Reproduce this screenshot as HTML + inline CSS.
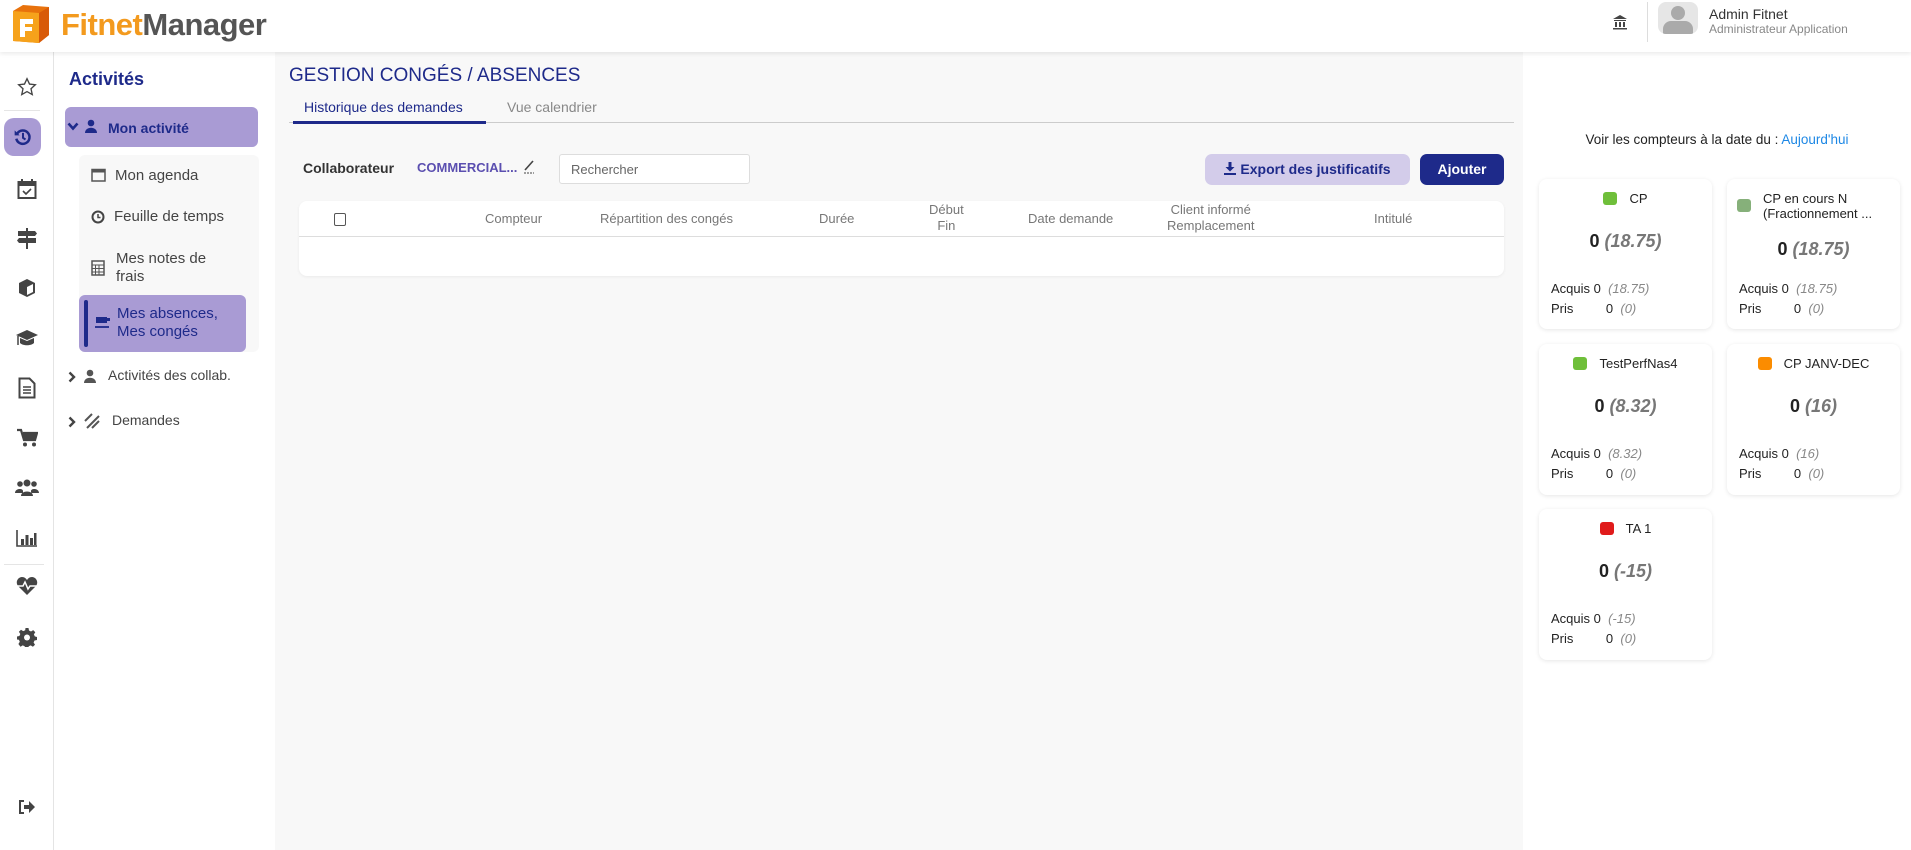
<!DOCTYPE html>
<html><head><meta charset="utf-8"><style>
*{box-sizing:border-box;margin:0;padding:0}
body{width:1911px;height:850px;overflow:hidden;font-family:"Liberation Sans",sans-serif;background:#f8f8f8;position:relative;color:#333}
.abs{position:absolute}
#top{left:0;top:0;width:1911px;height:52px;background:#fff;box-shadow:0 2px 4px rgba(0,0,0,.08);z-index:5}
#rail{left:0;top:52px;width:54px;height:798px;background:#fff;border-right:1px solid #e4e4e4}
#sub{left:54px;top:52px;width:221px;height:798px;background:#fff}
#right{left:1523px;top:52px;width:388px;height:798px;background:#fff}
.ic{position:absolute;left:13px;width:28px;height:28px;display:flex;align-items:center;justify-content:center}
.card{position:absolute;width:173px;height:150px;background:#fff;border-radius:8px;box-shadow:0 1px 4px rgba(0,0,0,.1);font-size:13px;color:#222}
.card .t{position:absolute;top:12px;left:0;right:0;text-align:center;font-size:13px}
.sq{display:inline-block;width:14px;height:13px;border-radius:3px;vertical-align:-2px;margin-right:12px}
.card .v{position:absolute;left:0;right:0;text-align:center;font-size:18px;font-weight:bold}
.card .v i{color:#777}
.card .r{position:absolute;left:12px;font-size:13px}
.card .r i{color:#888}
.th{position:absolute;font-size:13px;color:#777;text-align:center}
</style></head><body>
<div id="top" class="abs">
 <svg class="abs" style="left:9px;top:3px" width="42" height="42" viewBox="0 0 42 42"><path d="M4 8 L14 2 L40 4 L40 32 L30 40 L4 38Z" fill="#e8720c"/><path d="M4 8 L30 10 L30 40 L4 38Z" fill="#f6a21b"/><path d="M30 10 L40 4 L40 32 L30 40Z" fill="#d85a08"/><path d="M11 16h13v5h-8v3h7v4h-7v6h-5z" fill="#fff"/></svg>
 <div class="abs" style="left:61px;top:7px;font-size:31px;font-weight:bold;letter-spacing:-0.5px"><span style="color:#f39a1e">Fitnet</span><span style="color:#555">Manager</span></div>
 <svg class="abs" style="left:1612px;top:14px" width="16" height="16" viewBox="0 0 16 16"><path d="M8 1 L15 5 H1Z M2 6h12v1H2z M3 8h2v5H3z M7 8h2v5H7z M11 8h2v5h-2z M1 14h14v1.5H1z" fill="#444"/></svg>
 <div class="abs" style="left:1647px;top:2px;width:1px;height:40px;background:#ddd"></div>
 <div class="abs" style="left:1658px;top:2px;width:40px;height:32px;background:#e6e6e6;border-radius:8px;overflow:hidden"><div class="abs" style="left:13px;top:4px;width:14px;height:14px;border-radius:50%;background:#aaa"></div><div class="abs" style="left:5px;top:19px;width:30px;height:18px;border-radius:8px 8px 0 0;background:#aaa"></div></div>
 <div class="abs" style="left:1709px;top:6px;font-size:14px;color:#333">Admin Fitnet</div>
 <div class="abs" style="left:1709px;top:22px;font-size:12px;color:#888">Administrateur Application</div>
</div>

<div id="rail" class="abs">
 <div class="ic" style="top:21px"><svg width="20" height="20" viewBox="0 0 24 24"><path d="M12 2l3 6.5 7 .8-5.2 4.8 1.5 7L12 17.5 5.7 21.1l1.5-7L2 9.3l7-.8z" fill="none" stroke="#444" stroke-width="1.6"/></svg></div>
 <div class="abs" style="left:4px;top:58px;width:36px;height:1px;background:#e5e5e5"></div>
 <div class="abs" style="left:4px;top:66px;width:37px;height:38px;background:#a99bd4;border-radius:10px;display:flex;align-items:center;justify-content:center"><svg width="20" height="20" viewBox="0 0 24 24"><path d="M5 8a8 8 0 1 1-1 6" fill="none" stroke="#1e2a8a" stroke-width="3"/><path d="M2 4v6h6z" fill="#1e2a8a"/><path d="M12 7v6l3 2" stroke="#1e2a8a" stroke-width="2.4" fill="none"/></svg></div>
 <div class="ic" style="top:123px"><svg width="20" height="22" viewBox="0 0 20 22"><rect x="1.5" y="4" width="17" height="16" fill="none" stroke="#444" stroke-width="2"/><rect x="1.5" y="4" width="17" height="4" fill="#444"/><path d="M5 1v5M15 1v5" stroke="#444" stroke-width="2"/><path d="M6 13l3 3 5-5" stroke="#444" stroke-width="1.6" fill="none"/></svg></div>
 <div class="ic" style="top:172px"><svg width="22" height="22" viewBox="0 0 22 22"><path d="M10 1h2v21h-2z M2 4h17l2 2.5-2 2.5H2z M3 11h17v5H3l-2-2.5z" fill="#444"/></svg></div>
 <div class="ic" style="top:222px"><svg width="20" height="20" viewBox="0 0 20 20"><path d="M10 1l8 4v10l-8 4-8-4V5z" fill="#444"/><path d="M10 9l6-3v8l-6 3z M3.5 6.5L10 9.5" fill="#fff"/></svg></div>
 <div class="ic" style="top:272px"><svg width="24" height="20" viewBox="0 0 24 20"><path d="M12 2L1 7l11 5 11-5z M5 10v5c3 3 11 3 14 0v-5l-7 3z" fill="#444"/><path d="M3 8v9" stroke="#444" stroke-width="1.5"/></svg></div>
 <div class="ic" style="top:322px"><svg width="18" height="22" viewBox="0 0 18 22"><path d="M1.5 1.5h10l5 5v14h-15z" fill="none" stroke="#444" stroke-width="2"/><path d="M5 10h8M5 13h8M5 16h8" stroke="#444" stroke-width="1.5"/></svg></div>
 <div class="ic" style="top:372px"><svg width="22" height="20" viewBox="0 0 22 20"><path d="M1 2h4l3 10h11l2-7H7" fill="none" stroke="#444" stroke-width="2.2"/><path d="M6 5h15l-2 7H8z" fill="#444"/><circle cx="9" cy="16.5" r="2" fill="#444"/><circle cx="18" cy="16.5" r="2" fill="#444"/></svg></div>
 <div class="ic" style="top:422px"><svg width="24" height="20" viewBox="0 0 24 20"><circle cx="12" cy="5" r="3.5" fill="#444"/><circle cx="5" cy="6" r="2.8" fill="#444"/><circle cx="19" cy="6" r="2.8" fill="#444"/><path d="M6 18c0-6 12-6 12 0z M0 15c0-5 8-5 8-2v2z M24 15c0-5-8-5-8-2v2z" fill="#444"/></svg></div>
 <div class="ic" style="top:472px"><svg width="22" height="18" viewBox="0 0 22 18"><path d="M1 1v16h20" stroke="#444" stroke-width="1.6" fill="none"/><path d="M5 10h3v6H5z M9.5 6h3v10h-3z M14 9h3v7h-3z M18 4h2.5v12H18z" fill="#444"/></svg></div>
 <div class="abs" style="left:4px;top:512px;width:40px;height:1px;background:#e5e5e5"></div>
 <div class="ic" style="top:520px"><svg width="22" height="20" viewBox="0 0 22 20"><path d="M11 19L2 10C-1 6 2 1 6 1c2.5 0 4 1.5 5 3 1-1.5 2.5-3 5-3 4 0 7 5 4 9z" fill="#444"/><path d="M1 10h6l2-4 3 7 2-3h7" stroke="#fff" stroke-width="1.5" fill="none"/></svg></div>
 <div class="ic" style="top:571px"><svg width="20" height="20" viewBox="0 0 20 20"><path d="M8.5 1h3l.5 2.5 2 1 2.2-1.4 2.1 2.1L16.9 7.4l.9 2 2.2.6v3l-2.5.5-.9 2 1.4 2.2-2.1 2.1-2.2-1.4-2 .9-.5 2.5h-3l-.5-2.5-2-.9-2.2 1.4L1.4 17l1.4-2.2-.9-2L-.1 12.5V9.5l2.5-.5.9-2L1.9 4.8 4 2.7l2.2 1.4 2-.9z" fill="#444"/><circle cx="10" cy="10.5" r="3" fill="#fff"/></svg></div>
 <div class="ic" style="top:741px"><svg width="18" height="16" viewBox="0 0 18 16"><path d="M6 2H2v12h4" stroke="#444" stroke-width="2" fill="none"/><path d="M6 6h5V2l6 6-6 6v-4H6z" fill="#444"/></svg></div>
</div>

<div id="sub" class="abs">
 <div class="abs" style="left:15px;top:17px;font-size:18px;font-weight:bold;color:#1e2a8a">Activités</div>
 <div class="abs" style="left:11px;top:55px;width:193px;height:40px;background:#a99bd4;border-radius:6px"></div>
 <svg class="abs" style="left:13px;top:70px" width="12" height="9" viewBox="0 0 12 9"><path d="M1.5 1.5L6 6.5l4.5-5" stroke="#1e2a8a" stroke-width="2.6" fill="none"/></svg>
 <svg class="abs" style="left:31px;top:67px" width="12" height="14" viewBox="0 0 12 14"><circle cx="6" cy="4" r="3.3" fill="#1e2a8a"/><path d="M0 14c0-7 12-7 12 0z" fill="#1e2a8a"/></svg>
 <div class="abs" style="left:54px;top:68px;font-size:14px;font-weight:bold;color:#1e2a8a">Mon activité</div>
 <div class="abs" style="left:25px;top:103px;width:180px;height:197px;background:#f8f8f8;border-radius:6px"></div>
 <svg class="abs" style="left:37px;top:115px" width="15" height="15" viewBox="0 0 15 15"><rect x="1" y="2.5" width="13" height="11.5" fill="none" stroke="#555" stroke-width="1.5"/><rect x="1" y="2.5" width="13" height="3" fill="#555"/></svg>
 <div class="abs" style="left:61px;top:115px;font-size:15px;color:#444">Mon agenda</div>
 <svg class="abs" style="left:37px;top:158px" width="14" height="14" viewBox="0 0 14 14"><circle cx="7" cy="7" r="5.5" fill="none" stroke="#444" stroke-width="2"/><path d="M7 4v3.5h2.5" stroke="#444" stroke-width="1.5" fill="none"/></svg>
 <div class="abs" style="left:60px;top:156px;font-size:15px;color:#444">Feuille de temps</div>
 <svg class="abs" style="left:37px;top:208px" width="14" height="16" viewBox="0 0 14 16"><rect x="1" y="1" width="12" height="14" fill="none" stroke="#555" stroke-width="1.5"/><path d="M1 5h12M1 8.5h12M1 12h12M4.5 5v10M8 5v10" stroke="#555"/></svg>
 <div class="abs" style="left:62px;top:198px;font-size:15px;color:#444;line-height:18px">Mes notes de<br>frais</div>
 <div class="abs" style="left:25px;top:243px;width:167px;height:57px;background:#a99bd4;border-radius:6px"></div>
 <div class="abs" style="left:30px;top:248px;width:4px;height:47px;background:#1e2a8a;border-radius:2px"></div>
 <svg class="abs" style="left:41px;top:263px" width="16" height="14" viewBox="0 0 16 14"><path d="M1 2h11v6H1z M12 3h3v3h-3" fill="#1e2a8a"/><path d="M0 12h14" stroke="#1e2a8a" stroke-width="1.8"/></svg>
 <div class="abs" style="left:63px;top:253px;font-size:15px;color:#1e2a8a;line-height:18px">Mes absences,<br>Mes congés</div>
 <svg class="abs" style="left:14px;top:319px" width="8" height="12" viewBox="0 0 8 12"><path d="M1.5 1.5L6 6l-4.5 4.5" stroke="#444" stroke-width="2.4" fill="none"/></svg>
 <svg class="abs" style="left:30px;top:317px" width="12" height="14" viewBox="0 0 12 14"><circle cx="6" cy="4" r="3.3" fill="#555"/><path d="M0 14c0-7 12-7 12 0z" fill="#555"/></svg>
 <div class="abs" style="left:54px;top:315px;font-size:14px;color:#444">Activités des collab.</div>
 <svg class="abs" style="left:14px;top:364px" width="8" height="12" viewBox="0 0 8 12"><path d="M1.5 1.5L6 6l-4.5 4.5" stroke="#444" stroke-width="2.4" fill="none"/></svg>
 <svg class="abs" style="left:29px;top:360px" width="18" height="18" viewBox="0 0 18 18"><path d="M2 9l7-7M4 16l12-12M9 16l7-7" stroke="#555" stroke-width="2"/></svg>
 <div class="abs" style="left:58px;top:360px;font-size:14px;color:#444">Demandes</div>
</div>

<div class="abs" style="left:289px;top:65px;font-size:19px;color:#1e2a8a">GESTION CONGÉS / ABSENCES</div>
<div class="abs" style="left:304px;top:99px;font-size:14px;color:#1e2a8a">Historique des demandes</div>
<div class="abs" style="left:507px;top:99px;font-size:14px;color:#888">Vue calendrier</div>
<div class="abs" style="left:289px;top:122px;width:1225px;height:1px;background:#ccc"></div>
<div class="abs" style="left:293px;top:121px;width:193px;height:3px;background:#1e2a8a"></div>
<div class="abs" style="left:303px;top:160px;font-size:14px;font-weight:bold;color:#333">Collaborateur</div>
<div class="abs" style="left:417px;top:160px;font-size:13px;font-weight:bold;color:#5b4fb0">COMMERCIAL...</div>
<svg class="abs" style="left:523px;top:159px" width="12" height="15" viewBox="0 0 12 15"><path d="M2 11L10 2" stroke="#444" stroke-width="1.6"/><path d="M1 14h10" stroke="#444" stroke-dasharray="2 1"/></svg>
<div class="abs" style="left:559px;top:154px;width:191px;height:30px;background:#fff;border:1px solid #ddd;border-radius:3px;font-size:13px;color:#666;padding:7px 11px">Rechercher</div>
<div class="abs" style="left:1205px;top:154px;width:205px;height:31px;background:#d3ccea;border-radius:7px;font-size:14px;font-weight:bold;color:#1e2a8a;text-align:center;line-height:31px"><svg width="12" height="13" viewBox="0 0 12 13" style="vertical-align:-1px;margin-right:4px"><path d="M4.5 0h3v5h3L6 9.5 1.5 5h3z M0 11h12v2H0z" fill="#1e2a8a"/></svg>Export des justificatifs</div>
<div class="abs" style="left:1420px;top:154px;width:84px;height:31px;background:#1e2a8a;border-radius:7px;font-size:14px;font-weight:bold;color:#fff;text-align:center;line-height:31px">Ajouter</div>
<div class="abs" style="left:299px;top:201px;width:1205px;height:75px;background:#fff;border-radius:8px;box-shadow:0 1px 3px rgba(0,0,0,.06)">
 <div class="abs" style="left:0;top:35px;width:100%;height:1px;background:#ddd"></div>
 <div class="abs" style="left:35px;top:12px;width:12px;height:13px;border:1.5px solid #555;border-radius:2px"></div>
 <div class="th" style="left:186px;top:10px">Compteur</div>
 <div class="th" style="left:301px;top:10px">Répartition des congés</div>
 <div class="th" style="left:520px;top:10px">Durée</div>
 <div class="th" style="left:630px;top:1px;line-height:16px">Début<br>Fin</div>
 <div class="th" style="left:729px;top:10px">Date demande</div>
 <div class="th" style="left:868px;top:1px;line-height:16px">Client informé<br>Remplacement</div>
 <div class="th" style="left:1075px;top:10px">Intitulé</div>
</div>

<div id="right" class="abs">
 <div class="abs" style="left:0;right:0;top:80px;text-align:center;font-size:13.5px;color:#222">Voir les compteurs à la date du : <span style="color:#1e88e5">Aujourd'hui</span></div>
</div>
<div class="card" style="left:1539px;top:179px;height:150px"><div class="t"><span class="sq" style="background:#6fbf3a"></span>CP</div><div class="v" style="top:52px">0 <i>(18.75)</i></div><div class="r" style="top:102px">Acquis 0 &nbsp;<i>(18.75)</i></div><div class="r" style="top:122px">Pris &nbsp;&nbsp;&nbsp;&nbsp;&nbsp;&nbsp;&nbsp;&nbsp;0 &nbsp;<i>(0)</i></div></div>
<div class="card" style="left:1727px;top:179px;height:150px"><div class="t" style="text-align:left;left:10px;top:12px;line-height:15px"><span class="sq" style="background:#86b07a;float:left;margin-top:8px"></span><div style="margin-left:26px">CP en cours N<br>(Fractionnement ...</div></div><div class="v" style="top:60px">0 <i>(18.75)</i></div><div class="r" style="top:102px">Acquis 0 &nbsp;<i>(18.75)</i></div><div class="r" style="top:122px">Pris &nbsp;&nbsp;&nbsp;&nbsp;&nbsp;&nbsp;&nbsp;&nbsp;0 &nbsp;<i>(0)</i></div></div>
<div class="card" style="left:1539px;top:344px;height:151px"><div class="t"><span class="sq" style="background:#6fbf3a"></span>TestPerfNas4</div><div class="v" style="top:52px">0 <i>(8.32)</i></div><div class="r" style="top:102px">Acquis 0 &nbsp;<i>(8.32)</i></div><div class="r" style="top:122px">Pris &nbsp;&nbsp;&nbsp;&nbsp;&nbsp;&nbsp;&nbsp;&nbsp;0 &nbsp;<i>(0)</i></div></div>
<div class="card" style="left:1727px;top:344px;height:151px"><div class="t"><span class="sq" style="background:#fb8c00"></span>CP JANV-DEC</div><div class="v" style="top:52px">0 <i>(16)</i></div><div class="r" style="top:102px">Acquis 0 &nbsp;<i>(16)</i></div><div class="r" style="top:122px">Pris &nbsp;&nbsp;&nbsp;&nbsp;&nbsp;&nbsp;&nbsp;&nbsp;0 &nbsp;<i>(0)</i></div></div>
<div class="card" style="left:1539px;top:509px;height:151px"><div class="t"><span class="sq" style="background:#e01b1b"></span>TA 1</div><div class="v" style="top:52px">0 <i>(-15)</i></div><div class="r" style="top:102px">Acquis 0 &nbsp;<i>(-15)</i></div><div class="r" style="top:122px">Pris &nbsp;&nbsp;&nbsp;&nbsp;&nbsp;&nbsp;&nbsp;&nbsp;0 &nbsp;<i>(0)</i></div></div>
</body></html>
